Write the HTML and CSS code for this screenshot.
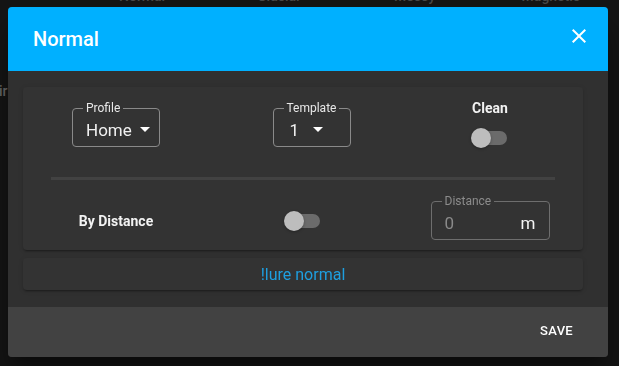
FILE: index.html
```html
<!DOCTYPE html>
<html lang="en">
  <head>
    <meta charset="UTF-8" />
    <meta name="viewport" content="width=device-width, initial-scale=1.0" />
    <title>Normal</title>
    <link rel="stylesheet" href="styles.css">
  </head>
  <body>
    <div class="page">
      <div class="tabs">
        <span>Normal</span>
        <span>Glacial</span>
        <span>Mossy</span>
        <span>Magnetic</span>
      </div>
      <div class="side-text">Fair</div>
    </div>

    <div class="overlay">
      <div class="dialog">
        <div class="dialog-header">
          <h1>Normal</h1>
          <button class="close" aria-label="Close">
            <svg viewBox="0 0 24 24" width="24" height="24">
              <path fill="#fff" d="M19,6.41L17.59,5L12,10.59L6.41,5L5,6.41L10.59,12L5,17.59L6.41,19L12,13.41L17.59,19L19,17.59L13.41,12L19,6.41Z" />
            </svg>
          </button>
        </div>

        <div class="dialog-body">
          <div class="card settings">
            <div class="row top-row">
              <div class="cell">
                <fieldset class="select profile">
                  <legend>Profile</legend>
                  <span class="value">Home</span>
                  <span class="caret"></span>
                </fieldset>
              </div>
              <div class="cell">
                <fieldset class="select template">
                  <legend>Template</legend>
                  <span class="value">1</span>
                  <span class="caret"></span>
                </fieldset>
              </div>
              <div class="cell stacked">
                <div class="label">Clean</div>
                <div class="switch"><span class="thumb"></span></div>
              </div>
            </div>

            <div class="divider"></div>

            <div class="row bottom-row">
              <div class="cell shifted">
                <div class="label">By Distance</div>
              </div>
              <div class="cell shifted">
                <div class="switch"><span class="thumb"></span></div>
              </div>
              <div class="cell">
                <fieldset class="select distance">
                  <legend>Distance</legend>
                  <span class="value muted">0</span>
                  <span class="suffix">m</span>
                </fieldset>
              </div>
            </div>
          </div>

          <div class="card lure">!lure normal</div>
        </div>

        <div class="dialog-actions">
          <button class="save">Save</button>
        </div>
      </div>
    </div>
  </body>
</html>
```

FILE: styles.css
```css
body {
  margin: 0;
  font-family: Roboto, "Noto Sans", sans-serif;
  background: #151515;
  color: #fff;
  overflow: hidden;
}

.page {
  height: 366px;
}

.tabs {
  display: flex;
  margin-top: -12px;
  padding-left: 74px;
}
.tabs span {
  width: 137px;
  text-align: center;
  font-size: 14px;
  font-weight: 500;
  color: #4a4a4a;
}

.side-text {
  margin-top: 79px;
  margin-left: -16px;
  font-size: 14px;
  font-weight: 500;
  color: #6a6a6a;
}

/* dialog sits over the page */
.overlay {
  position: fixed;
  top: 0;
  left: 0;
  width: 100%;
  height: 100%;
}

.dialog {
  position: absolute;
  top: 7px;
  left: 8px;
  width: 600px;
  height: 350px;
  display: flex;
  flex-direction: column;
  border-radius: 4px;
  overflow: hidden;
  background: #303030;
  box-shadow: 0 11px 15px -7px rgba(0, 0, 0, 0.4), 0 24px 38px 3px rgba(0, 0, 0, 0.3);
}

.dialog-header {
  height: 64px;
  background: #00b0ff;
  display: flex;
  align-items: center;
  justify-content: space-between;
  padding: 0 17px 0 25px;
}
.dialog-header h1 {
  margin: 0;
  font-size: 20px;
  font-weight: 500;
}
.close {
  background: none;
  border: none;
  padding: 0;
  width: 24px;
  height: 24px;
  margin-top: -6px;
  cursor: pointer;
}

.dialog-body {
  flex: 1;
  padding: 16px 25px 0 15px;
  display: flex;
  flex-direction: column;
  gap: 8px;
}

.card {
  background: #333;
  border-radius: 4px;
  box-shadow: 0 3px 1px -2px rgba(0, 0, 0, 0.2), 0 2px 2px 0 rgba(0, 0, 0, 0.14),
    0 1px 5px 0 rgba(0, 0, 0, 0.12);
}

.settings {
  padding: 14px 28px 10px;
}

.row {
  display: grid;
  grid-template-columns: 130px 1fr 130px;
  align-items: center;
}
.cell {
  display: flex;
  justify-content: center;
}
.cell.stacked {
  flex-direction: column;
  align-items: center;
  gap: 15px;
  margin-top: -4px;
}
.cell.shifted {
  margin-top: 7px;
}

.top-row {
  height: 46px;
}
.bottom-row {
  height: 46px;
  margin-top: 14px;
}

.divider {
  height: 3px;
  background: #424242;
  margin-top: 30px;
}

.label {
  font-size: 14px;
  font-weight: 700;
  color: #f2f2f2;
}

.select {
  margin: 0;
  min-width: 0;
  box-sizing: border-box;
  height: 46px;
  border: 1px solid #8a8a8a;
  border-radius: 4px;
  padding: 0 10px 0 13px;
  display: flex;
  align-items: center;
}
.select legend {
  font-size: 12px;
  line-height: 14px;
  padding: 0 3px;
  margin-left: -3px;
  color: #e8e8e8;
}
.select .value {
  font-size: 17px;
  color: #f0f0f0;
  margin-top: -2px;
}
.caret {
  width: 0;
  height: 0;
  border-left: 5px solid transparent;
  border-right: 5px solid transparent;
  border-top: 5px solid #fff;
  margin-left: 8px;
  margin-top: -3px;
}

.select.profile {
  width: 88px;
}
.select.template {
  width: 78px;
  padding-left: 16px;
  margin-left: 17px;
}
.select.template legend {
  margin-left: -6px;
}
.select.template .value {
  width: 15px;
}
.select.distance {
  width: 119px;
  border-color: #6e6e6e;
  justify-content: space-between;
  padding-right: 13px;
}
.select.distance legend {
  color: #8c8c8c;
}
.select .muted {
  color: #8a8a8a;
}
.suffix {
  font-size: 17px;
  color: #f5f5f5;
  margin-top: -2px;
}

.switch {
  position: relative;
  width: 34px;
  height: 14px;
  border-radius: 7px;
  background: #6b6b6b;
}
.thumb {
  position: absolute;
  left: -2px;
  top: -3px;
  width: 20px;
  height: 20px;
  border-radius: 50%;
  background: #bdbdbd;
  box-shadow: 0 1px 3px rgba(0, 0, 0, 0.3);
}

.lure {
  height: 32px;
  display: flex;
  align-items: center;
  justify-content: center;
  font-size: 16px;
  color: #1e9fe0;
}

.dialog-actions {
  height: 50px;
  background: #424242;
  display: flex;
  align-items: center;
  justify-content: flex-end;
  padding-right: 35px;
  margin-top: 17px;
}
.save {
  background: none;
  border: none;
  padding: 0;
  color: #fff;
  font-family: inherit;
  font-size: 13px;
  font-weight: 500;
  text-transform: uppercase;
  letter-spacing: 0.3px;
  margin-top: -4px;
  cursor: pointer;
}
```
